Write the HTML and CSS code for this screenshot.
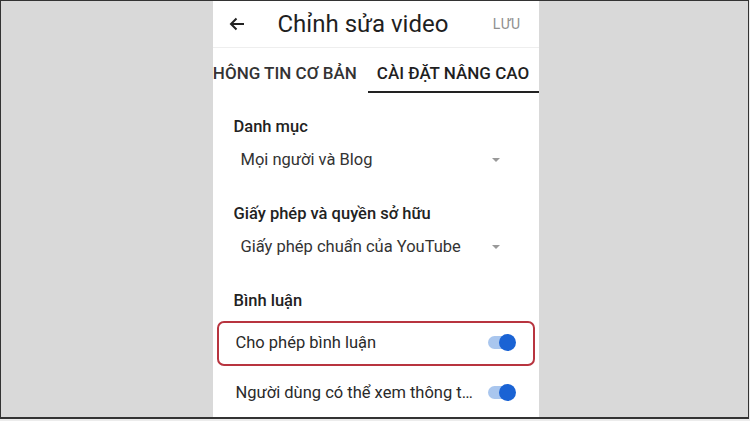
FILE: index.html
```html
<!DOCTYPE html>
<html lang="vi">
<head>
    <meta charset="UTF-8">
    <meta name="viewport" content="width=device-width, initial-scale=1.0">
    <title>Chỉnh sửa video</title>
    <link rel="stylesheet" href="styles.css">
</head>
<body>

    <div class="frame">
        <div class="phone">
            <div class="topbar">
                <span class="back">
                    <svg width="16" height="14" viewBox="0 0 16 14">
                        <path d="M15 7H2M7.5 1.5L2 7l5.5 5.5" fill="none" stroke="#222" stroke-width="2"/>
                    </svg>
                </span>
                <span class="title">Chỉnh sửa video</span>
                <span class="save">LƯU</span>
            </div>

            <div class="tabs">
                <div class="tab">THÔNG TIN CƠ BẢN</div>
                <div class="tab active">CÀI ĐẶT NÂNG CAO</div>
            </div>

            <div class="content">
                <div class="section">
                    <div class="label">Danh mục</div>
                    <div class="select">
                        <span>Mọi người và Blog</span>
                        <span class="caret"></span>
                    </div>
                </div>

                <div class="section">
                    <div class="label">Giấy phép và quyền sở hữu</div>
                    <div class="select">
                        <span>Giấy phép chuẩn của YouTube</span>
                        <span class="caret"></span>
                    </div>
                </div>

                <div class="section">
                    <div class="label">Bình luận</div>
                </div>

                <div class="row highlight">
                    <span class="row-text">Cho phép bình luận</span>
                    <span class="switch"><span class="knob"></span></span>
                </div>

                <div class="row">
                    <span class="row-text">Người dùng có thể xem thông tin xếp hạng</span>
                    <span class="switch"><span class="knob"></span></span>
                </div>
            </div>
        </div>
    </div>

</body>
</html>
```

FILE: styles.css
```css
body {
    margin: 0;
    background: #ececec;
    font-family: Roboto, 'Liberation Sans', Arial, sans-serif;
}

.frame {
    width: 749px;
    height: 419px;
    box-sizing: border-box;
    border: 1px solid #333;
    border-bottom-width: 2px;
    background: #d9d9d9;
    display: flex;
    justify-content: center;
    overflow: hidden;
}

.phone {
    width: 326px;
    margin-left: 2px;
    background: #fff;
    height: 100%;
}

.topbar {
    height: 46px;
    border-bottom: 1px solid #eee;
    display: flex;
    align-items: center;
}

.back {
    width: 16px;
    height: 14px;
    margin-left: 16px;
    display: flex;
}

.title {
    font-size: 24px;
    color: #1f1f1f;
    margin-left: 33px;
    flex: 1;
}

.save {
    font-size: 14px;
    color: #909090;
    margin-right: 18px;
    letter-spacing: 0.5px;
}

.tabs {
    display: flex;
    overflow: hidden;
    white-space: nowrap;
}

.tab {
    font-size: 17px;
    font-weight: 500;
    color: #333;
    padding: 16px 8px 9px 9px;
    line-height: 18px;
    border-bottom: 2px solid transparent;
}

.tab:first-child {
    margin-left: -19px;
    padding-right: 11px;
}

.tab.active {
    color: #1f1f1f;
    border-bottom-color: #222;
    flex: 1;
}

.content {
    padding-top: 24px;
}

.section {
    padding-left: 21px;
    padding-right: 34px;
    margin-bottom: 34px;
}

.label {
    font-size: 16.5px;
    font-weight: 500;
    color: #222;
    line-height: 20px;
}

.select {
    display: flex;
    justify-content: space-between;
    align-items: center;
    margin-top: 13px;
    padding-left: 7px;
    font-size: 16.5px;
    line-height: 20px;
    color: #333;
}

.caret {
    width: 0;
    height: 0;
    border-left: 4px solid transparent;
    border-right: 4px solid transparent;
    border-top: 4px solid #999;
    margin-right: 5px;
}

.section:nth-child(3) {
    margin-bottom: 10px;
}

.row {
    height: 45px;
    box-sizing: border-box;
    margin: 5px 4px 0 4px;
    padding: 0 21px 2px 17px;
    display: flex;
    align-items: center;
    justify-content: space-between;
    border: 2px solid transparent;
}

.row.highlight {
    margin-top: 0;
    border-color: #b8343f;
    border-radius: 7px;
}

.row-text {
    font-size: 16.5px;
    color: #2a2a2a;
    white-space: nowrap;
    overflow: hidden;
    text-overflow: ellipsis;
    max-width: 238px;
}

.switch {
    position: relative;
    width: 24px;
    height: 13px;
    border-radius: 7px;
    background: #a9c6ee;
    flex-shrink: 0;
}

.knob {
    position: absolute;
    right: -4px;
    top: -2px;
    width: 17px;
    height: 17px;
    border-radius: 50%;
    background: #1a63d4;
}
```
